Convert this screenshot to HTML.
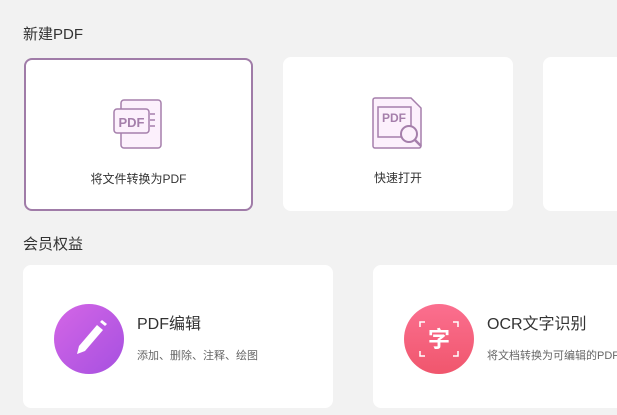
<html><head><style>
body{margin:0;width:617px;height:415px;background:#f2f2f2;font-family:"Liberation Sans","Noto Sans CJK SC",sans-serif;position:relative;overflow:hidden;color:#333}
.h{position:absolute;left:23px;font-size:15px;color:#333}
.c{position:absolute;background:#fff;border-radius:8px;box-sizing:border-box}
.lbl{position:absolute;width:100%;text-align:center;font-size:12px;color:#333}
.circ{position:absolute;width:70px;height:70px;border-radius:50%;top:39px;left:31px}
.t{position:absolute;left:114px;top:45px;font-size:16px;color:#333}
.s{position:absolute;left:114px;top:82px;font-size:11px;color:#666;white-space:nowrap}
</style></head><body>
<div class="h" style="top:23px">新建PDF</div>
<div class="c" style="left:24px;top:58px;width:229px;height:153px;border:2px solid #a07ca8">
<svg style="position:absolute;left:86px;top:39px" width="56" height="52" viewBox="0 0 56 52">
<rect x="9" y="1" width="40" height="48" rx="3" fill="#fcf0fc" stroke="#a57fab" stroke-width="1.5"/>
<rect x="2" y="10" width="35" height="24" rx="3" fill="#fcf0fc" stroke="#a57fab" stroke-width="1.5"/>
<text x="19.5" y="28" text-anchor="middle" font-size="13" font-weight="bold" fill="#a57fab" font-family="Liberation Sans">PDF</text>
<path d="M38 15h5M38 21h5M38 27h5" stroke="#a57fab" stroke-width="1.5"/>
</svg>
<div class="lbl" style="top:110px">将文件转换为PDF</div></div>
<div class="c" style="left:283px;top:57px;width:230px;height:154px">
<svg style="position:absolute;left:88px;top:40px" width="56" height="56" viewBox="0 0 56 56">
<path d="M2 3a2 2 0 0 1 2-2h36l10 10v38a2 2 0 0 1-2 2H4a2 2 0 0 1-2-2z" fill="#fcf0fc" stroke="#a57fab" stroke-width="1.5"/>
<rect x="7" y="10" width="33" height="30" fill="none" stroke="#a57fab" stroke-width="1.5"/>
<text x="23" y="25" text-anchor="middle" font-size="12" font-weight="bold" fill="#a57fab" font-family="Liberation Sans">PDF</text>
<circle cx="38" cy="37" r="8" fill="#fcf0fc" stroke="#a57fab" stroke-width="2"/>
<path d="M44 43l6 6" stroke="#a57fab" stroke-width="2.5"/>
</svg>
<div class="lbl" style="top:112px">快速打开</div></div>
<div class="c" style="left:543px;top:57px;width:100px;height:154px"></div>
<div class="h" style="top:233px">会员权益</div>
<div class="c" style="left:23px;top:265px;width:310px;height:143px">
<div class="circ" style="background:linear-gradient(135deg,#d466e6,#a650e0)">
<svg width="70" height="70" viewBox="0 0 70 70"><path d="M43 21l6 5-18 21-8 3 2-8z" fill="#fff"/><path d="M46 18l2-2 5 4-2 2z" fill="#fff"/></svg></div>
<div class="t">PDF编辑</div><div class="s">添加、删除、注释、绘图</div></div>
<div class="c" style="left:373px;top:265px;width:260px;height:143px">
<div class="circ" style="background:linear-gradient(180deg,#fb6f8f,#f0566d)">
<svg width="70" height="70" viewBox="0 0 70 70"><path d="M16 23v-5h5M49 18h5v5M16 47v5h5M49 52h5v-5" stroke="#fff" stroke-width="1.5" fill="none"/>
<text x="35" y="43" text-anchor="middle" font-size="22" font-weight="bold" fill="#fff" font-family="Noto Sans CJK SC">字</text></svg></div>
<div class="t">OCR文字识别</div><div class="s">将文档转换为可编辑的PDF</div></div>
</body></html>
